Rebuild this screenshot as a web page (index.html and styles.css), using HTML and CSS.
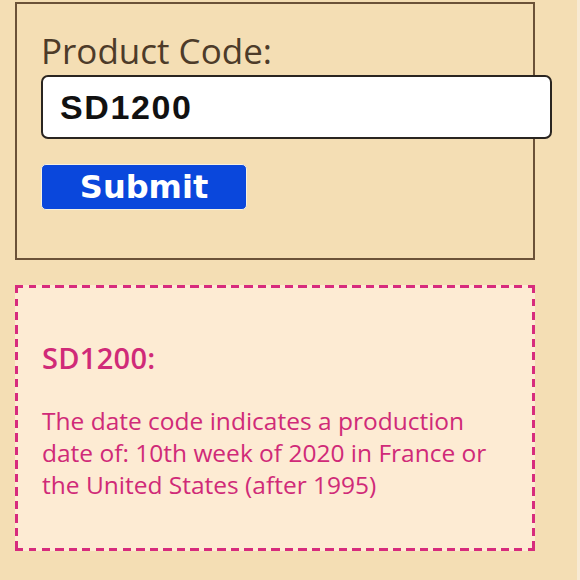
FILE: index.html
```html
<!DOCTYPE html>
<html>
<head>
<meta charset="utf-8">
<link rel="stylesheet" href="styles.css">
</head>
<body>
<div class="page">
  <form class="form-box">
    <label class="label" for="code">Product Code:</label>
    <input class="code-input" id="code" type="text" value="SD1200">
    <button class="submit" type="button">Submit</button>
  </form>
  <section class="result">
    <h2 class="result-title">SD1200:</h2>
    <p class="result-text">The date code indicates a production date of: 10th week of 2020 in France or the United States (after 1995)</p>
  </section>
</div>
</body>
</html>
```
FILE: styles.css
```css
html, body {
  margin: 0;
  padding: 0;
  background: #f8ead3;
}
.page {
  width: 577px;
  height: 580px;
  padding: 2px 0 0 15px;
  box-sizing: border-box;
  background: #f4deb4;
  font-family: "Open Sans", "Noto Sans", sans-serif;
}
.form-box {
  width: 520px;
  height: 258px;
  box-sizing: border-box;
  border: 2px solid #6b5238;
  padding: 25px 0 0 24px;
  display: flex;
  flex-direction: column;
  align-items: flex-start;
}
.label {
  font-size: 35px;
  color: #4d3b29;
  line-height: 44px;
  height: 46px;
}
.code-input {
  width: 511px;
  height: 64px;
  box-sizing: border-box;
  border: 2px solid #2a2520;
  border-radius: 7px;
  background: #fff;
  padding: 0 0 0 17px;
  font-family: "Liberation Sans", Arial, sans-serif;
  font-weight: bold;
  font-size: 34px;
  letter-spacing: 1.6px;
  color: #111;
  margin: 0;
  outline: none;
}
.submit {
  margin-top: 25px;
  width: 206px;
  height: 46px;
  background: #0a47dc;
  border: 1px solid #f6f0e0;
  border-radius: 5px;
  color: #fff;
  font-family: "DejaVu Sans", sans-serif;
  font-weight: bold;
  font-size: 32px;
  padding: 0;
  line-height: 44px;
}
.result {
  margin-top: 25px;
  width: 520px;
  height: 266px;
  box-sizing: border-box;
  background:
    repeating-linear-gradient(90deg, #d72b7d 0 8px, transparent 8px 13.5px) left top / 100% 3px no-repeat,
    repeating-linear-gradient(90deg, #d72b7d 0 8px, transparent 8px 13.5px) left bottom / 100% 3px no-repeat,
    repeating-linear-gradient(180deg, #d72b7d 0 8px, transparent 8px 13.5px) left top / 3px 100% no-repeat,
    repeating-linear-gradient(180deg, #d72b7d 0 8px, transparent 8px 13.5px) right top / 3px 100% no-repeat,
    #fdebd3;
  padding: 55px 0 0 27px;
  color: #d02a78;
}
.result-title {
  margin: 0;
  font-size: 29px;
  font-weight: 600;
  line-height: 36px;
  letter-spacing: 0.3px;
}
.result-text {
  margin: 29px 0 0 0;
  font-size: 24.5px;
  line-height: 32px;
  width: 450px;
}
```
